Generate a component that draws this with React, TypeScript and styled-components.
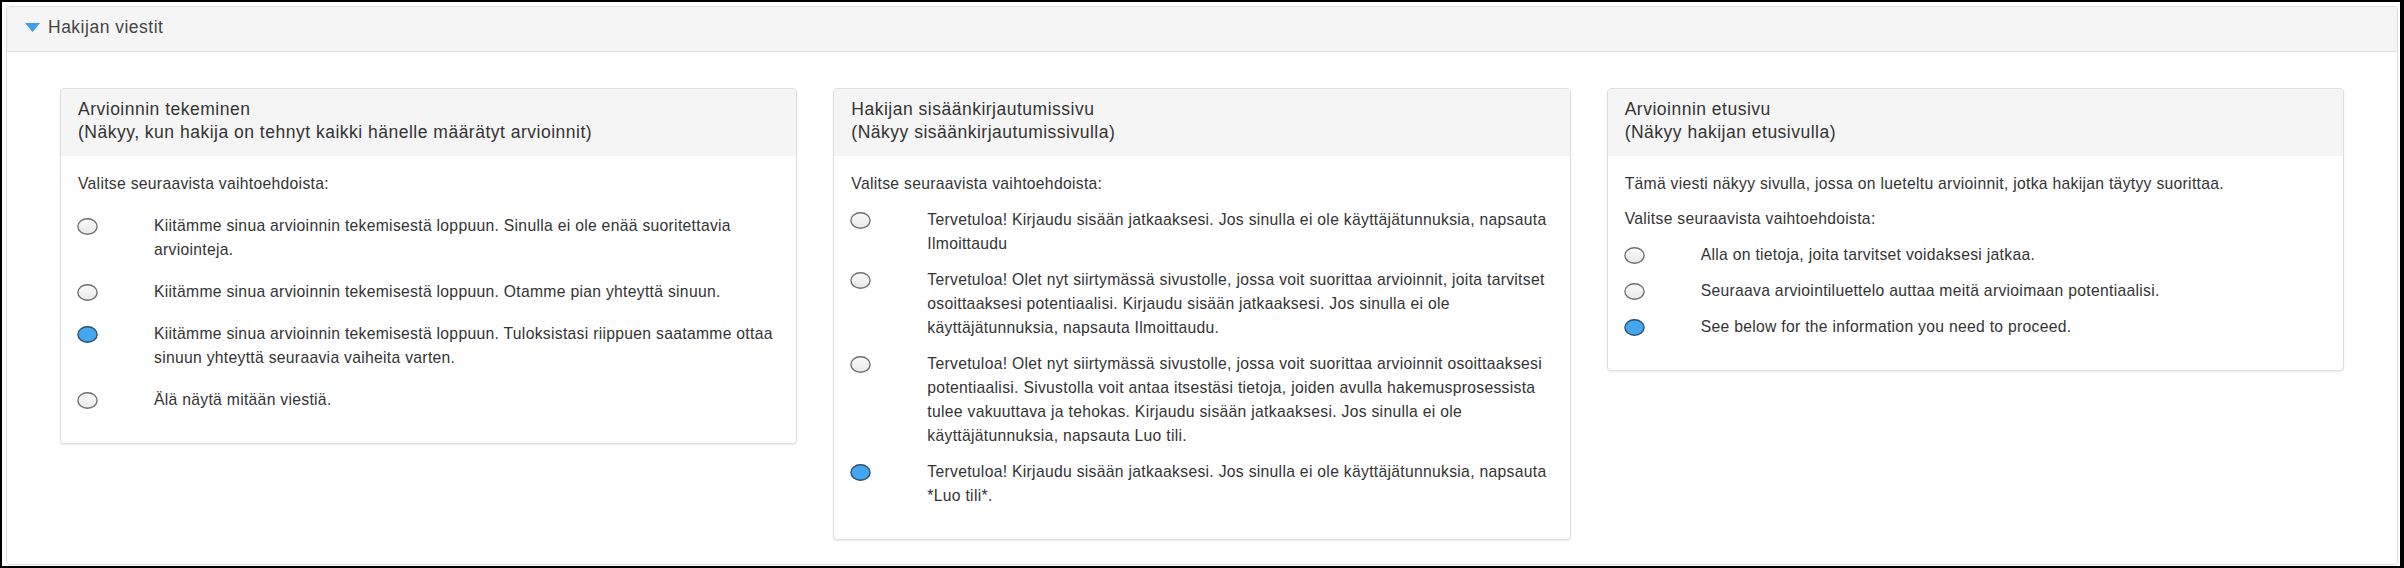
import styled, { createGlobalStyle } from "styled-components";

const GlobalStyle = createGlobalStyle`
  html, body {
    margin: 0;
    padding: 0;
    background: #fff;
  }
  body {
    font-family: "Liberation Sans", Arial, sans-serif;
    color: #333;
  }
`;

const Frame = styled.div`
  box-sizing: border-box;
  height: 568px;
  display: flex;
  flex-direction: column;
  border: 2px solid #000;
  border-right-width: 4px;
  padding: 4px 2px 1px 4px;
  background: #fff;
`;

const Panel = styled.section`
  flex: 1;
  display: flex;
  flex-direction: column;
  border: 1px solid #ddd;
  border-radius: 4px;
  overflow: hidden;
`;

const PanelHeader = styled.header`
  display: flex;
  align-items: center;
  gap: 8px;
  padding: 9px 18px 12px;
  background: #f5f5f5;
  border-bottom: 1px solid #ddd;
  font-size: 17.5px;
  letter-spacing: 0.5px;
  line-height: 23px;
  color: #444;
`;

const Caret = styled.svg`
  width: 15px;
  height: 9px;
  flex: none;
`;

const PanelBody = styled.div`
  flex: 1;
  display: grid;
  grid-template-columns: repeat(3, 1fr);
  align-items: start;
  gap: 36px;
  padding: 36px 53px 20px;
`;

const Card = styled.article`
  border: 1px solid #dedede;
  border-radius: 4px;
  background: #fff;
  box-shadow: 0 1px 2px rgba(0, 0, 0, 0.09);
  overflow: hidden;
`;

const CardHeading = styled.div`
  padding: 9px 17px 12px;
  background: #f5f5f5;
  font-size: 17.5px;
  letter-spacing: 0.5px;
  line-height: 23px;
  color: #333;
`;

const CardBody = styled.div`
  padding: 16px 12px 31px 17px;
  font-size: 15.7px;
  letter-spacing: 0.3px;
  line-height: 24px;
  color: #333;
`;

const Paragraph = styled.p`
  margin: 0 0 11px;

  &:last-of-type {
    margin-bottom: 0;
  }
`;

const OptionList = styled.div<{ $gap: number }>`
  display: flex;
  flex-direction: column;
  gap: ${p => p.$gap}px;
  margin-top: ${p => p.$gap}px;
`;

const OptionRow = styled.label`
  display: grid;
  grid-template-columns: 76px 1fr;
  align-items: start;
`;

const RadioMark = styled.svg`
  width: 21px;
  height: 17px;
  margin-top: 4px;
  margin-left: -1px;
`;

const OptionText = styled.span``;

const Radio = ({ checked }: { checked?: boolean }) => (
  <RadioMark viewBox="0 0 21 17">
    <defs>
      <linearGradient id="radioOff" x1="0" y1="0" x2="0" y2="1">
        <stop offset="0" stopColor="#fbfbfb" />
        <stop offset="1" stopColor="#e8e8e8" />
      </linearGradient>
    </defs>
    <ellipse
      cx="10.5"
      cy="8.5"
      rx="9.6"
      ry="7.7"
      fill={checked ? "#43a6ee" : "url(#radioOff)"}
      stroke={checked ? "#2f4f6c" : "#6f6f6f"}
      strokeWidth="1.4"
    />
  </RadioMark>
);

type CardData = {
  title: string;
  subtitle: string;
  intro?: string;
  gap: number;
  options: string[];
  selected: number;
};

const cards: CardData[] = [
  {
    title: "Arvioinnin tekeminen",
    subtitle: "(Näkyy, kun hakija on tehnyt kaikki hänelle määrätyt arvioinnit)",
    gap: 18,
    selected: 2,
    options: [
      "Kiitämme sinua arvioinnin tekemisestä loppuun. Sinulla ei ole enää suoritettavia arviointeja.",
      "Kiitämme sinua arvioinnin tekemisestä loppuun. Otamme pian yhteyttä sinuun.",
      "Kiitämme sinua arvioinnin tekemisestä loppuun. Tuloksistasi riippuen saatamme ottaa sinuun yhteyttä seuraavia vaiheita varten.",
      "Älä näytä mitään viestiä."
    ]
  },
  {
    title: "Hakijan sisäänkirjautumissivu",
    subtitle: "(Näkyy sisäänkirjautumissivulla)",
    gap: 12,
    selected: 3,
    options: [
      "Tervetuloa! Kirjaudu sisään jatkaaksesi. Jos sinulla ei ole käyttäjätunnuksia, napsauta Ilmoittaudu",
      "Tervetuloa! Olet nyt siirtymässä sivustolle, jossa voit suorittaa arvioinnit, joita tarvitset osoittaaksesi potentiaalisi. Kirjaudu sisään jatkaaksesi. Jos sinulla ei ole käyttäjätunnuksia, napsauta Ilmoittaudu.",
      "Tervetuloa! Olet nyt siirtymässä sivustolle, jossa voit suorittaa arvioinnit osoittaaksesi potentiaalisi. Sivustolla voit antaa itsestäsi tietoja, joiden avulla hakemusprosessista tulee vakuuttava ja tehokas. Kirjaudu sisään jatkaaksesi. Jos sinulla ei ole käyttäjätunnuksia, napsauta Luo tili.",
      "Tervetuloa! Kirjaudu sisään jatkaaksesi. Jos sinulla ei ole käyttäjätunnuksia, napsauta *Luo tili*."
    ]
  },
  {
    title: "Arvioinnin etusivu",
    subtitle: "(Näkyy hakijan etusivulla)",
    intro: "Tämä viesti näkyy sivulla, jossa on lueteltu arvioinnit, jotka hakijan täytyy suorittaa.",
    gap: 12,
    selected: 2,
    options: [
      "Alla on tietoja, joita tarvitset voidaksesi jatkaa.",
      "Seuraava arviointiluettelo auttaa meitä arvioimaan potentiaalisi.",
      "See below for the information you need to proceed."
    ]
  }
];

const MessageCard = ({ card }: { card: CardData }) => (
  <Card>
    <CardHeading>
      {card.title}
      <br />
      {card.subtitle}
    </CardHeading>
    <CardBody>
      {card.intro && <Paragraph>{card.intro}</Paragraph>}
      <Paragraph>Valitse seuraavista vaihtoehdoista:</Paragraph>
      <OptionList $gap={card.gap}>
        {card.options.map((text, i) => (
          <OptionRow key={i}>
            <Radio checked={i === card.selected} />
            <OptionText>{text}</OptionText>
          </OptionRow>
        ))}
      </OptionList>
    </CardBody>
  </Card>
);

export default function App() {
  return (
    <>
      <GlobalStyle />
      <Frame>
        <Panel>
          <PanelHeader>
            <Caret viewBox="0 0 15 9">
              <path d="M0 0 H15 L7.5 9 Z" fill="#3f9fe6" />
            </Caret>
            Hakijan viestit
          </PanelHeader>
          <PanelBody>
            {cards.map(card => (
              <MessageCard key={card.title} card={card} />
            ))}
          </PanelBody>
        </Panel>
      </Frame>
    </>
  );
}
